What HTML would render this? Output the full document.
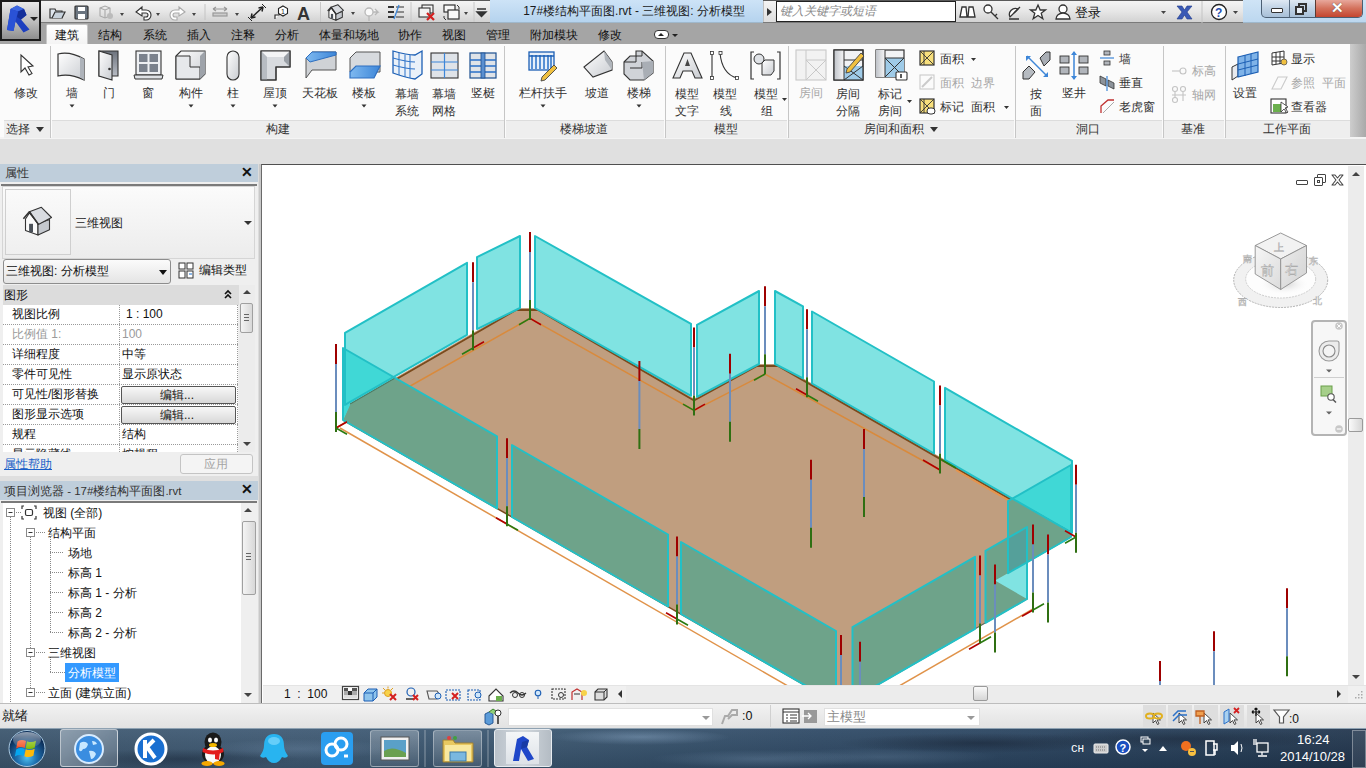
<!DOCTYPE html>
<html><head><meta charset="utf-8">
<style>
*{margin:0;padding:0;box-sizing:border-box}
html,body{width:1366px;height:768px;overflow:hidden;background:#dfdfdf;font-family:"Liberation Sans",sans-serif;font-size:12px;color:#222;position:relative}
.a{position:absolute}
.t{position:absolute;white-space:nowrap;line-height:14px}
svg{position:absolute;overflow:visible}
.c{transform:translateX(-50%)}
.g{color:#a8a8a8}
</style></head><body>
<!-- TITLE BAR -->
<div class="a" style="left:0;top:0;width:1366px;height:23px;background:linear-gradient(#f4f4f4,#e6e6e6 50%,#d2d2d2);border-top:1px solid #5a5a5a;border-bottom:1px solid #7a7a7a"></div>
<div class="a" style="left:1243px;top:0;width:123px;height:23px;background:linear-gradient(#cfe4f6,#bcd7ef);border-bottom:1px solid #9fb8cc"></div>
<div class="a" style="left:490px;top:0;width:273px;height:23px;background:linear-gradient(#cde3f7,#b5d3ee);border-bottom:1px solid #9fb8cc"></div>
<div class="t" style="left:634px;top:4px;font-size:11.9px;color:#1a1a1a" ><span class="c" style="position:absolute;left:0">17#楼结构平面图.rvt - 三维视图: 分析模型</span></div>
<!-- tabs row -->
<div class="a" style="left:0;top:23px;width:1366px;height:21px;background:#a5a5a5"></div>
<!-- app button -->
<div class="a" style="left:0;top:0;width:41px;height:41px;background:linear-gradient(#e8e8e8,#bcbcbc 55%,#8f8f8f);border:2px solid #1b1b1b"></div>
<svg style="left:4px;top:2px" width="30" height="32" viewBox="0 0 30 32">
<path d="M3 28 L6.5 7 L13 3.5 L20 7 L22.5 13 L17 17.5 L25.5 27.5 L19.5 30.5 L11.5 19.5 L9.5 29 Z" fill="#1d3fbf"/>
<path d="M6.5 7 L13 3.5 L20 7 L14 9.5 Z" fill="#3b66e0"/>
<path d="M14 9.5 L20 7 L22.5 13 L17 17.5 L13 15 Z" fill="#142f9a"/>
<path d="M6.5 7 L14 9.5 L11.5 19.5 L9.5 29 L3 28 Z" fill="#2a52d6"/>
</svg>
<div class="a" style="left:30px;top:17px;width:0;height:0;border-left:4px solid transparent;border-right:4px solid transparent;border-top:4px solid #222"></div>
<!-- QAT -->
<svg style="left:48px;top:4px" width="440" height="16" viewBox="0 0 440 16">
<g fill="none" stroke="#333" stroke-width="1.2">
 <path d="M2 5 h5 l1 2 h6 v7 h-12 z" fill="#dfe6ee"/><path d="M4 14 l3 -6 h10 l-3 6" fill="#c8d2dc"/>
 <rect x="27" y="2" width="13" height="13" rx="1" fill="#6b7580"/><rect x="30" y="3" width="7" height="4" fill="#fff" stroke="none"/><rect x="30" y="10" width="7" height="5" fill="#fff" stroke="none"/>
</g>
<g fill="none" stroke="#a9a9a9" stroke-width="1.1"><path d="M52 4 l5 -2 l5 2 v8 l-5 2 l-5 -2 z"/><path d="M52 4 l5 2 l5 -2 M57 6 v8"/></g>
<circle cx="62" cy="12" r="3" fill="#bbb"/>
<path d="M72 9 l4 0 l-2 3 z" fill="#444"/>
<path d="M88 8 l6 -5 v3 h4 a5 5 0 0 1 0 10 h-2 v-3 h2 a2 2 0 0 0 0 -4 h-4 v3 z" fill="#fff" stroke="#333" stroke-width="1.1"/>
<path d="M108 9 l4 0 l-2 3 z" fill="#444"/>
<path d="M137 8 l-6 -5 v3 h-4 a5 5 0 0 0 0 10 h2 v-3 h-2 a2 2 0 0 1 0 -4 h4 v3 z" fill="#fff" stroke="#aaa" stroke-width="1.1"/>
<path d="M144 9 l4 0 l-2 3 z" fill="#444"/>
<line x1="157" y1="0" x2="157" y2="16" stroke="#c4c4c4"/>
<g stroke="#999" stroke-width="1.2" fill="none"><path d="M165 5 h14 M165 5 l3 -2 M165 5 l3 2 M179 5 l-3 -2 M179 5 l-3 2"/><rect x="165" y="9" width="14" height="3" fill="#ccc"/></g>
<path d="M187 9 l4 0 l-2 3 z" fill="#444"/>
<g stroke="#222" stroke-width="1.5" fill="none"><path d="M203 14 l12 -11"/><path d="M203 14 l1 -4.5 M203 14 l4.5 -1 M215 3 l-4.5 1 M215 3 l-1 4.5"/><path d="M200 13 l4 4 M214 0 l4 4" stroke-width="1"/></g>
<g stroke="#222" stroke-width="1.1" fill="#fff"><path d="M227 15 v-4 h4 l2 -2"/><path d="M235 2 l4.5 2.5 v5 l-4.5 2.5 l-4.5 -2.5 v-5 z"/></g><text x="233" y="10" font-size="7" fill="#222">1</text>
<text x="249" y="16" font-size="18" font-weight="bold" fill="#333" style="font-family:'Liberation Sans'">A</text>
<line x1="272.5" y1="-2" x2="272.5" y2="18" stroke="#c8c8c8"/>
<g transform="translate(279.5,0.5) scale(0.56) translate(-23,-207)">
<path d="M25.5 219 L29.4 213 L38 223.5 L38 235 L25.5 230.4 Z" fill="#fafafa" stroke="#333" stroke-width="1.8" stroke-linejoin="round"/>
<path d="M38 223.5 L49.5 219.5 L49.5 229.8 L38 235 Z" fill="#c4c8ce" stroke="#333" stroke-width="1.8" stroke-linejoin="round"/>
<path d="M29.4 211.8 L41.4 207.3 L51.5 217.5 L38.4 224.4 Z" fill="#d9dce1" stroke="#333" stroke-width="1.8" stroke-linejoin="round"/>
<path d="M23.4 218.7 L29.4 211.8 L38.4 224.4" fill="none" stroke="#333" stroke-width="2.4" stroke-linejoin="round"/>
<rect x="29.1" y="223.8" width="3.9" height="8.4" fill="#4a5058"/>
</g>
<path d="M303 8 l4 0 l-2 3 z" fill="#444"/>
<g stroke="#b8b8b8" stroke-width="1.3" fill="#fafafa"><circle cx="321" cy="8" r="4"/><path d="M325 8 l5 0 l-3 -3 M330 8 l-3 3"/><path d="M321 12 v5"/></g>
<g stroke="#333" stroke-width="2" fill="none"><path d="M340 3 h6 M340 8 h6 M340 13 h6"/><path d="M348 3 h8 M348 8 h8 M348 13 h8" stroke-width="1.2"/></g><path d="M346 15 l5 -14" stroke="#3d86d8" stroke-width="1.3"/>
<line x1="363" y1="-2" x2="363" y2="18" stroke="#c8c8c8"/>
<g stroke="#333" stroke-width="1.1" fill="#f4f4f4"><rect x="374" y="1" width="11" height="8"/><rect x="371" y="4" width="11" height="9"/></g><path d="M379 9 l7 7 M386 9 l-7 7" stroke="#d42020" stroke-width="2.2"/>
<g stroke="#333" stroke-width="1.2" fill="#f8f8f8"><rect x="396" y="1" width="11" height="7"/><rect x="400" y="6" width="11" height="9"/></g><path d="M409 1 l2 2 v2 M396 12 v2 l2 2" stroke="#333" stroke-width="1" fill="none"/>
<path d="M416 8 l4 0 l-2 3 z" fill="#444"/>
<line x1="426" y1="-2" x2="426" y2="18" stroke="#c8c8c8"/>
<path d="M429 5 h9 M429 8 l4.5 4.5 l4.5 -4.5 z" stroke="#333" fill="#333" stroke-width="1.4"/>
</svg>
<!-- title right tools -->
<div class="a" style="left:763px;top:1px;width:12px;height:21px;background:linear-gradient(#f4f4f4,#dedede);border-left:1px solid #c0c0c0"></div>
<div class="a" style="left:767px;top:8px;width:0;height:0;border-top:4px solid transparent;border-bottom:4px solid transparent;border-left:5px solid #333"></div>
<div class="a" style="left:776px;top:1px;width:180px;height:21px;background:#fff;border:1px solid #222"></div>
<div class="t" style="left:780px;top:4px;font-style:italic;color:#8a8a8a;font-size:12px">键入关键字或短语</div>
<svg style="left:958px;top:3px" width="290" height="18" viewBox="0 0 290 18">
<g stroke="#333" stroke-width="1.3" fill="#fff">
 <path d="M2 14 l2 -10 h4 l1 10 z M10 14 l1 -10 h4 l2 10 z"/>
 <circle cx="30" cy="6" r="4"/><path d="M33 9 l7 7 M37 13 l2 -2"/>
 <path d="M52 14 a6 6 0 0 1 8 -8 z"/><path d="M56 10 l6 -6 M51 16 h10"/>
 <path d="M80 2 l2.2 5 h5.3 l-4.3 3.3 l1.6 5.5 l-4.8 -3.3 l-4.8 3.3 l1.6 -5.5 l-4.3 -3.3 h5.3 z"/>
 <circle cx="105" cy="6" r="4"/><path d="M98 16 a7 6 0 0 1 14 0 z"/>
</g>
<text x="117" y="14" font-size="12.5" fill="#111">登录</text>
<path d="M203 8 l5 0 l-2.5 3 z" fill="#444"/>
<path d="M219 3 h5 l2.5 4 l2.5 -4 h5 l-5 6 l5 7 h-5 l-2.5 -4 l-2.5 4 h-5 l5 -7 z" fill="#3a59b5" stroke="#1e3a8a" stroke-width="0.6"/>
<line x1="244" y1="-2" x2="244" y2="20" stroke="#c4c4c4"/>
<circle cx="261" cy="9" r="7.5" fill="#fff" stroke="#222" stroke-width="1.3"/><text x="257" y="13.5" font-size="12" font-weight="bold" fill="#1f4fb0">?</text>
<path d="M275 8 l5 0 l-2.5 3 z" fill="#444"/>
</svg>
<!-- window buttons -->
<div class="a" style="left:1261px;top:0;width:102px;height:18px;border:1px solid #4b5f73;border-top:none;border-radius:0 0 5px 5px;overflow:hidden;background:linear-gradient(#dfe9f3,#c2d4e6 45%,#a8c0d8)">
 <div class="a" style="left:27px;top:0;width:1px;height:18px;background:#5a6e82"></div>
 <div class="a" style="left:53px;top:0;width:48px;height:18px;background:linear-gradient(#e8a89c,#d4735e 45%,#c2402a);border-left:1px solid #5a3a32"></div>
 <div class="a" style="left:9px;top:8px;width:12px;height:5px;background:#fff;border:1px solid #333;border-radius:1px"></div>
 <div class="a" style="left:36px;top:3px;width:9px;height:9px;border:2px solid #333;background:transparent"></div>
 <div class="a" style="left:33px;top:6px;width:9px;height:9px;border:2px solid #333;background:#e6eef6"></div>
 <div class="t" style="left:69px;top:1px;font-size:15px;font-weight:bold;color:#fff;text-shadow:0 0 1px #333">✕</div>
</div>
<!-- TABS -->
<div class="a" style="left:46px;top:24px;width:42px;height:21px;background:linear-gradient(#ffffff,#f3f3f3);border:1px solid #c8c8c8;border-bottom:none;border-radius:2px 2px 0 0"></div>
<div class="t" style="left:55px;top:28px;font-size:12px;color:#111">建筑</div>
<div class="t" style="left:98px;top:28px;font-size:12px;color:#111">结构</div>
<div class="t" style="left:143px;top:28px;font-size:12px;color:#111">系统</div>
<div class="t" style="left:187px;top:28px;font-size:12px;color:#111">插入</div>
<div class="t" style="left:231px;top:28px;font-size:12px;color:#111">注释</div>
<div class="t" style="left:275px;top:28px;font-size:12px;color:#111">分析</div>
<div class="t" style="left:319px;top:28px;font-size:12px;color:#111">体量和场地</div>
<div class="t" style="left:398px;top:28px;font-size:12px;color:#111">协作</div>
<div class="t" style="left:442px;top:28px;font-size:12px;color:#111">视图</div>
<div class="t" style="left:486px;top:28px;font-size:12px;color:#111">管理</div>
<div class="t" style="left:530px;top:28px;font-size:12px;color:#111">附加模块</div>
<div class="t" style="left:598px;top:28px;font-size:12px;color:#111">修改</div>
<div class="a" style="left:654px;top:30px;width:15px;height:9px;background:#fff;border:1px solid #333;border-radius:4px"></div>
<div class="a" style="left:658px;top:33px;width:0;height:0;border-left:3.5px solid transparent;border-right:3.5px solid transparent;border-bottom:3.5px solid #222"></div>
<div class="a" style="left:672px;top:34px;width:0;height:0;border-left:3px solid transparent;border-right:3px solid transparent;border-top:3px solid #222"></div>
<!-- RIBBON BODY -->
<div class="a" style="left:0;top:44px;width:1350px;height:94px;background:#fbfbfb"></div>
<div class="a" style="left:1350px;top:44px;width:16px;height:94px;background:linear-gradient(90deg,#cdcdcd,#a9a9a9)"></div>
<div class="a" style="left:0;top:137px;width:1366px;height:2px;background:#f4f4f4"></div>
<!-- label strips -->
<div class="a" style="left:4px;top:120px;width:46px;height:18px;background:#eeeeee;border-top:1px solid #dcdcdc"></div>
<div class="a" style="left:52px;top:120px;width:452px;height:18px;background:#eeeeee;border-top:1px solid #dcdcdc"></div>
<div class="a" style="left:506px;top:120px;width:158px;height:18px;background:#eeeeee;border-top:1px solid #dcdcdc"></div>
<div class="a" style="left:666px;top:120px;width:121px;height:18px;background:#eeeeee;border-top:1px solid #dcdcdc"></div>
<div class="a" style="left:789px;top:120px;width:225px;height:18px;background:#eeeeee;border-top:1px solid #dcdcdc"></div>
<div class="a" style="left:1016px;top:120px;width:146px;height:18px;background:#eeeeee;border-top:1px solid #dcdcdc"></div>
<div class="a" style="left:1164px;top:120px;width:60px;height:18px;background:#eeeeee;border-top:1px solid #dcdcdc"></div>
<div class="a" style="left:1226px;top:120px;width:124px;height:18px;background:#eeeeee;border-top:1px solid #dcdcdc"></div>
<!-- separators -->
<div class="a" style="left:50px;top:46px;width:1px;height:92px;background:#c6c6c6"></div>
<div class="a" style="left:504px;top:46px;width:1px;height:92px;background:#c6c6c6"></div>
<div class="a" style="left:665px;top:46px;width:1px;height:92px;background:#c6c6c6"></div>
<div class="a" style="left:788px;top:46px;width:1px;height:92px;background:#c6c6c6"></div>
<div class="a" style="left:1015px;top:46px;width:1px;height:92px;background:#c6c6c6"></div>
<div class="a" style="left:1163px;top:46px;width:1px;height:92px;background:#c6c6c6"></div>
<div class="a" style="left:1225px;top:46px;width:1px;height:92px;background:#c6c6c6"></div>
<!-- panel labels -->
<div class="t" style="left:6px;top:122px;color:#333">选择</div><div class="a" style="left:36px;top:127px;width:0;height:0;border-left:4.5px solid transparent;border-right:4.5px solid transparent;border-top:5px solid #333"></div>
<div class="t" style="left:266px;top:122px;color:#333">构建</div>
<div class="t" style="left:560px;top:122px;color:#333">楼梯坡道</div>
<div class="t" style="left:714px;top:122px;color:#333">模型</div>
<div class="t" style="left:864px;top:122px;color:#333">房间和面积</div><div class="a" style="left:930px;top:127px;width:0;height:0;border-left:4.5px solid transparent;border-right:4.5px solid transparent;border-top:5px solid #333"></div>
<div class="t" style="left:1076px;top:122px;color:#333">洞口</div>
<div class="t" style="left:1181px;top:122px;color:#333">基准</div>
<div class="t" style="left:1263px;top:122px;color:#333">工作平面</div>
<!-- button labels -->
<div style="position:absolute;left:0;top:0;color:#333">
<div class="t" style="left:14px;top:86px">修改</div>
<div class="t" style="left:66px;top:86px">墙</div>
<div class="t" style="left:103px;top:86px">门</div>
<div class="t" style="left:142px;top:86px">窗</div>
<div class="t" style="left:179px;top:86px">构件</div>
<div class="t" style="left:227px;top:86px">柱</div>
<div class="t" style="left:263px;top:86px">屋顶</div>
<div class="t" style="left:302px;top:86px">天花板</div>
<div class="t" style="left:352px;top:86px">楼板</div>
<div class="t" style="left:395px;top:86px;line-height:17px">幕墙<br>系统</div>
<div class="t" style="left:432px;top:86px;line-height:17px">幕墙<br>网格</div>
<div class="t" style="left:471px;top:86px">竖梃</div>
<div class="t" style="left:519px;top:86px">栏杆扶手</div>
<div class="t" style="left:585px;top:86px">坡道</div>
<div class="t" style="left:627px;top:86px">楼梯</div>
<div class="t" style="left:675px;top:86px;line-height:17px">模型<br>文字</div>
<div class="t" style="left:713px;top:86px;line-height:17px">模型<br>&nbsp;&nbsp;线</div>
<div class="t" style="left:754px;top:86px;line-height:17px">模型<br>&nbsp;&nbsp;组</div>
<div class="t g" style="left:799px;top:86px">房间</div>
<div class="t" style="left:836px;top:86px;line-height:17px">房间<br>分隔</div>
<div class="t" style="left:878px;top:86px;line-height:17px">标记<br>房间</div>
<div class="t" style="left:940px;top:52px">面积</div>
<div class="t g" style="left:940px;top:76px">面积&nbsp;&nbsp;边界</div>
<div class="t" style="left:940px;top:100px">标记&nbsp;&nbsp;面积</div>
<div class="t" style="left:1030px;top:86px;line-height:17px">按<br>面</div>
<div class="t" style="left:1062px;top:86px">竖井</div>
<div class="t" style="left:1119px;top:52px">墙</div>
<div class="t" style="left:1119px;top:76px">垂直</div>
<div class="t" style="left:1119px;top:100px">老虎窗</div>
<div class="t g" style="left:1192px;top:64px">标高</div>
<div class="t g" style="left:1192px;top:88px">轴网</div>
<div class="t" style="left:1233px;top:86px">设置</div>
<div class="t" style="left:1291px;top:52px">显示</div>
<div class="t g" style="left:1291px;top:76px">参照&nbsp;&nbsp;平面</div>
<div class="t" style="left:1291px;top:100px">查看器</div>
</div>
<svg style="left:0;top:0" width="1366" height="140" viewBox="0 0 1366 140">
<defs>
<linearGradient id="gw" x1="0" y1="0" x2="1" y2="1"><stop offset="0" stop-color="#ffffff"/><stop offset="1" stop-color="#c9ccd1"/></linearGradient>
<linearGradient id="gd" x1="0" y1="0" x2="0" y2="1"><stop offset="0" stop-color="#6c727c"/><stop offset="1" stop-color="#b8bcc4"/></linearGradient>
<linearGradient id="gcol" x1="0" y1="0" x2="1" y2="0"><stop offset="0" stop-color="#bfc3c9"/><stop offset="1" stop-color="#f6f6f7"/></linearGradient>
<linearGradient id="gb" x1="0" y1="0" x2="1" y2="0"><stop offset="0" stop-color="#7fb9f0"/><stop offset="1" stop-color="#3d86d8"/></linearGradient>
</defs>
<!-- cursor -->
<path d="M21 55 L21 72 L25 68 L29 75 L32 73.5 L28 67 L33 66 Z" fill="#fff" stroke="#333" stroke-width="1.1"/>
<!-- wall -->
<path d="M58 54 Q70 51 84 59 L84 80 Q70 73 58 76 Z" fill="url(#gw)" stroke="#333" stroke-width="1.2"/>
<path d="M80 57 L84 59 L84 80 L80 77 Z" fill="#aeb3ba"/>
<!-- door -->
<path d="M99 51 L118 51 L118 76 L99 76 Z" fill="url(#gd)" stroke="#333" stroke-width="1.1"/>
<path d="M99 51 L112 55 L112 80 L99 76 Z" fill="url(#gw)" stroke="#333" stroke-width="1.1"/>
<circle cx="109.5" cy="69" r="1.3" fill="#333"/>
<!-- window -->
<rect x="136" y="51" width="25" height="24" fill="#eef0f3" stroke="#333" stroke-width="1.1"/>
<rect x="139" y="54" width="19" height="18" fill="#7b828d"/>
<path d="M148.5 54 V72 M139 63 H158" stroke="#eef0f3" stroke-width="2"/>
<path d="M134 75 H163 L162 79 H135 Z" fill="#dfe2e6" stroke="#333" stroke-width="1"/>
<!-- component -->
<path d="M176 56 L181 51 L205 51 L205 74 L200 79 L176 79 Z" fill="url(#gw)" stroke="#333" stroke-width="1.1"/>
<path d="M176 56 L190 56 L190 67 L200 67 L200 79 L176 79 Z" fill="#e6e8eb" stroke="#333" stroke-width="1"/>
<path d="M200 56 L205 51 L205 74 L200 79 Z" fill="#9ea3aa"/>
<!-- column -->
<rect x="227" y="51" width="12" height="29" rx="6" fill="url(#gw)" stroke="#333" stroke-width="1.1"/>
<!-- roof -->
<path d="M261 51 H290 V67 H276 V80 H261 Z" fill="#d8dbdf" stroke="#333" stroke-width="1.1"/>
<path d="M261 51 L267 57 H284 L290 51 Z" fill="#f4f5f6"/>
<path d="M267 57 V80 H261 V51 Z" fill="#b7bcc2"/><path d="M284 57 L290 51 V67 L284 61 Z" fill="#9aa0a7"/>
<path d="M261 51 H290 V67 H276 V80 H261 Z" fill="none" stroke="#333" stroke-width="1.1"/>
<!-- ceiling -->
<path d="M306 58 L312 52 H336 V70 H312 L306 78 Z" fill="#cfd2d6" stroke="#555" stroke-width="1"/>
<path d="M306 58 L312 52 H336 L336 55 L310 62 Z" fill="url(#gb)" stroke="#2e6fc0" stroke-width="1"/>
<!-- floor -->
<path d="M350 58 L356 52 H380 V72 H350 Z" fill="#d7dade" stroke="#555" stroke-width="1"/>
<path d="M350 72 L356 66 H380 L374 78 H350 Z" fill="url(#gb)" stroke="#2e6fc0" stroke-width="1.2"/>
<!-- curtain system -->
<path d="M393 51 Q407 55 415 55 L422 51 V74 L415 79 Q407 78 393 73 Z" fill="#eaf1f9" stroke="#1c5fb4" stroke-width="1.3"/>
<path d="M399 53 V75 M405 54.5 V77 M410 55 V78 M393 58 Q407 62 415 62 M393 65 Q407 69 415 69" stroke="#2a70c8" stroke-width="1" fill="none"/>
<!-- curtain grid -->
<rect x="431" y="53" width="27" height="25" fill="#dfe3e8" stroke="#333" stroke-width="1.1"/>
<path d="M444.5 53 V78 M431 62 H458 M431 70 H458" stroke="#3d86d8" stroke-width="1.2"/>
<!-- mullion -->
<rect x="470" y="53" width="26" height="25" fill="#dfe3e8" stroke="#1c4f8f" stroke-width="1.2"/>
<path d="M470 60 H496 M470 66 H496 M470 72 H496" stroke="#2a70c8" stroke-width="1.5"/>
<rect x="481" y="53" width="4" height="25" fill="#5a8fd0" stroke="#1c4f8f" stroke-width="0.8"/>
<!-- railing -->
<rect x="529" y="52" width="25" height="18" fill="#e7f0fa" stroke="#1c5fb4" stroke-width="1.3"/>
<path d="M532 55 V69 M536 55 V69 M540 55 V69 M544 55 V69 M548 55 V69 M551 55 V69" stroke="#2a70c8" stroke-width="1.5"/>
<path d="M529 56 H554" stroke="#1c5fb4" stroke-width="1.5"/>
<path d="M542 77 L554 65 L557 68 L545 80 L541 81 Z" fill="#f0c040" stroke="#444" stroke-width="0.9"/>
<!-- ramp -->
<path d="M584 67 L604 51 L612 62 L612 70 L593 77 Z" fill="url(#gw)" stroke="#333" stroke-width="1.1"/>
<path d="M604 51 L612 62 L612 70 L605 60 Z" fill="#b0b5bb"/>
<!-- stairs -->
<path d="M624 62 L630 56 H636 V51 L642 51 L653 61 V73 L644 80 H630 L624 74 Z" fill="#d0d3d8" stroke="#333" stroke-width="1.1"/>
<path d="M624 62 H636 V56 H642 V51 M630 68 H642 V62" fill="none" stroke="#333" stroke-width="1"/>
<path d="M642 62 L653 61 V73 L644 80 Z" fill="#a9aeb5"/>
<!-- model text -->
<path d="M673 78 L684 53 L691 53 L702 78 L695 78 L692 71 L683 71 L680 78 Z" fill="url(#gw)" stroke="#333" stroke-width="1.1"/>
<path d="M685 66 L690 66 L687.5 59 Z" fill="#444"/>
<!-- model line -->
<path d="M712 53 V78 M720 53 Q722 74 737 78" fill="none" stroke="#333" stroke-width="1.1"/>
<rect x="710.5" y="51.5" width="3" height="3" fill="#fff" stroke="#333" stroke-width="0.8"/><rect x="710.5" y="76.5" width="3" height="3" fill="#fff" stroke="#333" stroke-width="0.8"/>
<rect x="719" y="51.5" width="3" height="3" fill="#fff" stroke="#333" stroke-width="0.8"/><rect x="735.5" y="76.5" width="3" height="3" fill="#fff" stroke="#333" stroke-width="0.8"/>
<!-- model group -->
<path d="M754 52 H751 V79 H754 M777 52 H780 V79 H777" fill="none" stroke="#333" stroke-width="1.2"/>
<circle cx="759" cy="59" r="5" fill="#dfe2e6" stroke="#333"/>
<path d="M762 63 L765 60 H774 V71 L771 75 H762 Z" fill="url(#gw)" stroke="#333" stroke-width="1"/>
<path d="M782 98 l5 0 l-2.5 3 z" fill="#333"/>
<!-- room gray -->
<rect x="796" y="50" width="30" height="30" fill="#f2f2f2" stroke="#c8c8c8" stroke-width="1.1"/>
<path d="M806 50 V80 M806 60 H826 M806 60 L826 80 M826 60 L806 80" stroke="#c8c8c8" stroke-width="1"/>
<!-- room separator -->
<rect x="834" y="50" width="29" height="30" fill="#f2f3f5" stroke="#333" stroke-width="1.2"/>
<rect x="834" y="50" width="10" height="30" fill="url(#gcol)"/>
<rect x="844" y="66" width="19" height="14" fill="#9fcbe8"/>
<path d="M844 50 V80 M844 60 H863 M844 66 L863 80 M863 66 L844 80" stroke="#333" stroke-width="1"/>
<rect x="834" y="50" width="29" height="30" fill="none" stroke="#333" stroke-width="1.2"/>
<path d="M847 69 L861 53 L864 56 L850 72 L846 73 Z" fill="#f0c040" stroke="#444" stroke-width="0.9"/>
<!-- tag room -->
<rect x="876" y="50" width="28" height="27" fill="#f2f3f5" stroke="#333" stroke-width="1.2"/>
<rect x="876" y="50" width="9" height="27" fill="url(#gcol)"/>
<rect x="885" y="58" width="19" height="19" fill="#9fcbe8"/>
<path d="M885 50 V77 M885 58 H904 M885 58 L904 77 M904 58 L885 77" stroke="#333" stroke-width="1"/>
<rect x="896" y="72" width="11" height="8" rx="1" fill="#fff" stroke="#333" stroke-width="1.1"/>
<path d="M901 74 v4" stroke="#111" stroke-width="1.4"/>
<path d="M907 100 l5 0 l-2.5 3 z" fill="#333"/>
<!-- small area icons -->
<rect x="920" y="51" width="14" height="14" fill="#f7df7c" stroke="#333" stroke-width="1.2"/>
<path d="M920 51 L934 65 M934 51 L920 65 M924 51 V65" stroke="#333" stroke-width="0.9"/>
<path d="M971 58 l5 0 l-2.5 3 z" fill="#333"/>
<rect x="920" y="75" width="14" height="14" fill="none" stroke="#cacaca" stroke-width="1.1"/>
<path d="M922 87 L932 77" stroke="#cacaca" stroke-width="2"/>
<rect x="920" y="99" width="14" height="14" fill="#f7df7c" stroke="#333" stroke-width="1.2"/>
<path d="M920 99 L934 113 M934 99 L920 113 M924 99 V113" stroke="#333" stroke-width="0.9"/>
<rect x="927" y="108" width="8" height="6" rx="3" fill="#fff" stroke="#333"/>
<path d="M1004 106 l5 0 l-2.5 3 z" fill="#333"/>
<!-- by face -->
<path d="M1040 58 L1046 52 H1050 V60 L1044 66 Z" fill="#a9aeb5" stroke="#333" stroke-width="1"/>
<path d="M1023 72 L1029 66 L1035 72 L1029 79 H1023 Z" fill="#b6bbc1" stroke="#333" stroke-width="1"/>
<path d="M1027 56 L1047 76" stroke="#3d86d8" stroke-width="1.5"/>
<path d="M1026 56 l5 0 l-5 5 z M1048 77 l-5 0 l5 -5 z" fill="#3d86d8"/>
<!-- shaft -->
<g fill="#b1b5bb" stroke="#333" stroke-width="0.9"><rect x="1060" y="56" width="9" height="7"/><rect x="1079" y="56" width="9" height="7"/><rect x="1060" y="67" width="9" height="7"/><rect x="1079" y="67" width="9" height="7"/></g>
<path d="M1074 52 V79" stroke="#3d86d8" stroke-width="1.5"/>
<path d="M1071 55 l3 -4 l3 4 z M1071 76 l3 4 l3 -4 z" fill="#3d86d8"/>
<!-- small opening icons -->
<g fill="#b1b5bb" stroke="#333" stroke-width="0.8"><rect x="1104" y="51" width="6" height="4"/><rect x="1104" y="61" width="6" height="4"/></g>
<path d="M1100 58 H1114" stroke="#3d86d8" stroke-width="1.2"/>
<path d="M1100 76 L1106 79 V86 L1100 83 Z M1108 80 L1114 83 V89 L1108 86 Z" fill="#8d939a" stroke="#333" stroke-width="0.8"/>
<path d="M1107 76 V91" stroke="#3d86d8" stroke-width="1.2"/>
<path d="M1101 113 V106 L1108 100 H1114" fill="none" stroke="#c03030" stroke-width="1.3"/>
<path d="M1103 113 L1114 102" stroke="#aaa" stroke-width="1"/>
<!-- datum gray -->
<g stroke="#c4c4c4" fill="none" stroke-width="1.1"><path d="M1172 71 h8"/><circle cx="1183" cy="71" r="3"/><circle cx="1175" cy="89" r="2.5"/><circle cx="1183" cy="89" r="2.5"/><circle cx="1175" cy="100" r="2.5"/><path d="M1175 92 v6 M1183 92 v9 M1172 95 h14"/></g>
<!-- workplane set -->
<path d="M1232 67 L1238 64 V76 L1232 80 Z" fill="#e8eaee" stroke="#333" stroke-width="1"/>
<path d="M1238 57 L1258 52 V72 L1238 77 Z" fill="#7fb3e8" stroke="#1c5fb4" stroke-width="1.2"/>
<path d="M1245 55 V76 M1251 54 V74 M1238 64 L1258 59 M1238 70 L1258 65" stroke="#1c5fb4" stroke-width="1"/>
<!-- show/ref/viewer -->
<g stroke="#333" stroke-width="1" fill="#fff"><path d="M1272 53 L1284 51 V63 L1272 65 Z"/><path d="M1276 52 V64 M1280 52 V64 M1272 57 H1284 M1272 61 H1284"/></g>
<circle cx="1284" cy="62" r="3" fill="#f0c040" stroke="#555" stroke-width="0.8"/>
<path d="M1272 89 L1278 77 H1287 L1281 89 Z" fill="none" stroke="#cacaca" stroke-width="1.1"/>
<rect x="1271" y="99" width="15" height="14" fill="#fff" stroke="#333" stroke-width="1.1"/>
<rect x="1273" y="104" width="9" height="8" fill="#6bb04d"/>
<path d="M1281 102 L1281 112 L1284 109 L1287 113 L1288 112 L1285 108 L1288 107 Z" fill="#fff" stroke="#333" stroke-width="0.8"/>
<!-- dropdown carets under buttons -->
<g fill="#333"><path d="M69.5 104.5 h5 l-2.5 3 z"/><path d="M188.5 104.5 h5 l-2.5 3 z"/><path d="M230.5 104.5 h5 l-2.5 3 z"/><path d="M272.5 104.5 h5 l-2.5 3 z"/><path d="M361.5 104.5 h5 l-2.5 3 z"/><path d="M540.5 104.5 h5 l-2.5 3 z"/><path d="M636.5 104.5 h5 l-2.5 3 z"/></g>
</svg>
<!-- PROPERTIES -->
<div class="a" style="left:0;top:139px;width:1366px;height:26px;background:#e0e0e0"></div>
<div class="a" style="left:0;top:164px;width:258px;height:18px;background:#bfcedb"></div>
<div class="t" style="left:5px;top:166px;font-size:12px;color:#333">属性</div>
<div class="t" style="left:241px;top:165px;font-size:14px;font-weight:bold;color:#111">✕</div>
<div class="a" style="left:0;top:182px;width:258px;height:294px;background:#efefef"></div>
<div class="a" style="left:1px;top:184px;width:256px;height:2px;background:#7a7a7a"></div>
<div class="a" style="left:2px;top:186px;width:253px;height:73px;background:linear-gradient(#fbfbfb,#ececec);border:1px solid #d5d5d5"></div>
<div class="a" style="left:5px;top:189px;width:66px;height:66px;background:linear-gradient(#fafafa,#efefef);border:1px solid #cfcfcf"></div>
<svg style="left:15px;top:198px" width="45" height="46" viewBox="15 198 45 46">
<path d="M25.5 219 L29.4 213 L38 223.5 L38 235 L25.5 230.4 Z" fill="#fafafa" stroke="#333" stroke-width="1.1" stroke-linejoin="round"/>
<path d="M38 223.5 L49.5 219.5 L49.5 229.8 L38 235 Z" fill="#c4c8ce" stroke="#333" stroke-width="1.1" stroke-linejoin="round"/>
<path d="M29.4 211.8 L41.4 207.3 L51.5 217.5 L38.4 224.4 Z" fill="#d9dce1" stroke="#333" stroke-width="1.1" stroke-linejoin="round"/>
<path d="M23.4 218.7 L29.4 211.8 L38.4 224.4" fill="none" stroke="#333" stroke-width="1.6" stroke-linejoin="round"/>
<rect x="29.1" y="223.8" width="3.9" height="8.4" fill="#4a5058"/>
</svg>
<div class="t" style="left:75px;top:216px;font-size:12px;color:#222">三维视图</div>
<div class="a" style="left:244px;top:221px;width:0;height:0;border-left:4px solid transparent;border-right:4px solid transparent;border-top:4px solid #333"></div>
<div class="a" style="left:3px;top:259px;width:168px;height:25px;background:linear-gradient(#fbfbfb,#e4e4e4);border:1px solid #8d8d8d;border-radius:3px"></div>
<div class="t" style="left:6px;top:264px;font-size:12px;color:#111">三维视图: 分析模型</div>
<div class="a" style="left:159px;top:270px;width:0;height:0;border-left:4px solid transparent;border-right:4px solid transparent;border-top:5px solid #111"></div>
<svg style="left:178px;top:262px" width="18" height="18" viewBox="0 0 18 18">
<g fill="#fff" stroke="#333" stroke-width="1"><rect x="1" y="1" width="6" height="6"/><rect x="1" y="9" width="6" height="7"/><rect x="9" y="1" width="6" height="6"/><rect x="9" y="9" width="6" height="7"/></g>
<path d="M11 12 h3" stroke="#3d86d8" stroke-width="1.2"/>
</svg>
<div class="t" style="left:199px;top:263px;font-size:12px;color:#111">编辑类型</div>
<!-- grid -->
<div class="a" style="left:3px;top:285px;width:236px;height:20px;background:#dcdcdc"></div>
<div class="t" style="left:4px;top:288px;font-size:12px;color:#111">图形</div>
<svg style="left:223px;top:289px" width="10" height="12" viewBox="0 0 10 12"><path d="M2 5 l3 -3 l3 3 M2 9 l3 -3 l3 3" fill="none" stroke="#111" stroke-width="1.6"/></svg>
<div class="a" style="left:3px;top:305px;width:235px;height:147px;background:#fff"></div>
<svg style="left:3px;top:305px" width="236" height="147" viewBox="0 0 236 147">
<g stroke="#9a9a9a" stroke-width="1" stroke-dasharray="1,1">
<path d="M0 19.5 H235 M0 39.5 H235 M0 59.5 H235 M0 79.5 H235 M0 99.5 H235 M0 119.5 H235 M0 139.5 H235"/>
<path d="M116.5 0 V147 M234.5 0 V147"/>
</g>
</svg>
<div style="position:absolute;left:0;top:0;font-size:12px;color:#111">
<div class="t" style="left:12px;top:307px">视图比例</div><div class="t" style="left:126px;top:307px">1 : 100</div>
<div class="t" style="left:12px;top:327px;color:#9a9a9a">比例值 1:</div><div class="t" style="left:122px;top:327px;color:#9a9a9a">100</div>
<div class="t" style="left:12px;top:347px">详细程度</div><div class="t" style="left:122px;top:347px">中等</div>
<div class="t" style="left:12px;top:367px">零件可见性</div><div class="t" style="left:122px;top:367px">显示原状态</div>
<div class="t" style="left:12px;top:387px">可见性/图形替换</div>
<div class="t" style="left:12px;top:407px">图形显示选项</div>
<div class="t" style="left:12px;top:427px">规程</div><div class="t" style="left:122px;top:427px">结构</div>
<div class="a" style="left:3px;top:445px;width:235px;height:7px;overflow:hidden"><div class="t" style="left:9px;top:2px">显示隐藏线</div><div class="t" style="left:119px;top:2px">按规程</div></div>
</div>
<div class="a" style="left:121px;top:386px;width:115px;height:18px;background:linear-gradient(#f8f8f8,#d8d8d8);border:1px solid #555;border-radius:2px"></div>
<div class="t" style="left:160px;top:388px;font-size:12px;color:#111">编辑...</div>
<div class="a" style="left:121px;top:406px;width:115px;height:18px;background:linear-gradient(#f8f8f8,#d8d8d8);border:1px solid #555;border-radius:2px"></div>
<div class="t" style="left:160px;top:408px;font-size:12px;color:#111">编辑...</div>
<!-- props scrollbar -->
<div class="a" style="left:239px;top:285px;width:16px;height:167px;background:#ececec"></div>
<div class="a" style="left:243px;top:290px;width:0;height:0;border-left:4px solid transparent;border-right:4px solid transparent;border-bottom:4px solid #444"></div>
<div class="a" style="left:240px;top:303px;width:13px;height:30px;background:linear-gradient(90deg,#f4f4f4,#d8d8d8);border:1px solid #a0a0a0;border-radius:2px"></div>
<div class="a" style="left:244px;top:314px;width:5px;height:7px;border-top:1px solid #666;border-bottom:1px solid #666"><div class="a" style="left:0;top:2px;width:5px;height:1px;background:#666"></div></div>
<div class="a" style="left:243px;top:442px;width:0;height:0;border-left:4px solid transparent;border-right:4px solid transparent;border-top:4px solid #444"></div>
<div class="t" style="left:4px;top:457px;font-size:12px;color:#1a5fc8;text-decoration:underline">属性帮助</div>
<div class="a" style="left:180px;top:454px;width:73px;height:20px;background:#f4f4f4;border:1px solid #c4c4c4;border-radius:3px"></div>
<div class="t" style="left:204px;top:457px;font-size:12px;color:#a4a4a4">应用</div>
<div class="a" style="left:0;top:476px;width:262px;height:5px;background:#dfdfdf"></div>
<div class="a" style="left:258px;top:164px;width:4px;height:541px;background:#dcdcdc"></div>
<!-- BROWSER -->
<div class="a" style="left:0;top:481px;width:258px;height:19px;background:#bfcedb"></div>
<div class="t" style="left:4px;top:484px;font-size:11.5px;color:#333">项目浏览器 - 17#楼结构平面图.rvt</div>
<div class="t" style="left:241px;top:482px;font-size:14px;font-weight:bold;color:#111">✕</div>
<div class="a" style="left:0;top:500px;width:258px;height:203px;background:#efefef"></div>
<div class="a" style="left:1px;top:501px;width:256px;height:2px;background:#7a7a7a"></div>
<div class="a" style="left:3px;top:503px;width:238px;height:200px;background:#fff"></div>
<svg style="left:3px;top:503px" width="238" height="200" viewBox="0 0 238 200">
<g stroke="#888" stroke-width="1" stroke-dasharray="1,1" fill="none">
<path d="M7.5 14 V200 M11 9.5 H18"/>
<path d="M27.5 34 V145 M31 29.5 H42"/>
<path d="M47.5 34 V129.5 M47 49.5 H60 M47 69.5 H60 M47 89.5 H60 M47 109.5 H60 M47 129.5 H60"/>
<path d="M31 149.5 H42 M31 189.5 H42 M27.5 154 V185"/>
<path d="M47.5 154 V169.5 M47 169.5 H62"/>

</g>
<g fill="#fff" stroke="#8a8a8a" stroke-width="1">
<rect x="3.5" y="5.5" width="8" height="8"/><rect x="23.5" y="25.5" width="8" height="8"/><rect x="23.5" y="145.5" width="8" height="8"/><rect x="23.5" y="185.5" width="8" height="8"/>
</g>
<g stroke="#333" stroke-width="1"><path d="M5.5 9.5 h4 M25.5 29.5 h4 M25.5 149.5 h4 M25.5 189.5 h4"/></g>
<g stroke="#333" stroke-width="1.2" fill="none"><path d="M21 3 h-2 v3 M21 16 h-2 v-3 M31 3 h2 v3 M31 16 h2 v-3"/><rect x="22.5" y="6.5" width="7" height="6" rx="1.5"/></g>
</svg>
<div style="position:absolute;left:0;top:0;font-size:12px;color:#111">
<div class="t" style="left:43px;top:506px">视图 (全部)</div>
<div class="t" style="left:48px;top:526px">结构平面</div>
<div class="t" style="left:68px;top:546px">场地</div>
<div class="t" style="left:68px;top:566px">标高 1</div>
<div class="t" style="left:68px;top:586px">标高 1 - 分析</div>
<div class="t" style="left:68px;top:606px">标高 2</div>
<div class="t" style="left:68px;top:626px">标高 2 - 分析</div>
<div class="t" style="left:48px;top:646px">三维视图</div>
<div class="a" style="left:65px;top:663px;width:54px;height:19px;background:#3399ff"></div>
<div class="t" style="left:68px;top:666px;color:#fff">分析模型</div>
<div class="t" style="left:48px;top:686px">立面 (建筑立面)</div>
</div>
<div class="a" style="left:241px;top:503px;width:16px;height:200px;background:#efefef"></div>
<div class="a" style="left:244px;top:508px;width:0;height:0;border-left:4px solid transparent;border-right:4px solid transparent;border-bottom:4px solid #444"></div>
<div class="a" style="left:242px;top:521px;width:14px;height:74px;background:linear-gradient(90deg,#f4f4f4,#d8d8d8);border:1px solid #a0a0a0;border-radius:2px"></div>
<div class="a" style="left:246px;top:553px;width:5px;height:7px;border-top:1px solid #666;border-bottom:1px solid #666"><div class="a" style="left:0;top:2px;width:5px;height:1px;background:#666"></div></div>
<div class="a" style="left:244px;top:693px;width:0;height:0;border-left:4px solid transparent;border-right:4px solid transparent;border-top:4px solid #444"></div>
<!-- VIEW -->
<div class="a" style="left:261px;top:164px;width:1105px;height:541px;background:#fff;border-top:1px solid #505050;border-left:1px solid #6a6a6a"></div>
<div class="a" style="left:259px;top:164px;width:2px;height:541px;background:#c8c8c8"></div>
<div class="a" style="left:262px;top:165px;width:1086px;height:520px;overflow:hidden"><svg style="left:0;top:0" width="1086" height="520" viewBox="262 165 1086 520">
<defs>
<clipPath id="cs"><polygon points="343.0,420.0 350.0,404.0 516.0,308.0 538.0,308.0 694.0,398.5 757.0,364.0 778.0,364.0 1071.0,532.0 1071.0,537.0 995.0,580.6 1027.0,599.0 841.0,706.0"/></clipPath>
<clipPath id="cBL1"><polygon points="345.0,404.9 467.0,334.8 467.0,262.8 345.0,332.9"/></clipPath>
<clipPath id="cBL2"><polygon points="477.0,329.1 520.0,308.0 520.0,236.0 477.0,257.1"/></clipPath>
<clipPath id="cBT1"><polygon points="535.0,308.0 691.0,395.8 691.0,323.8 535.0,236.0"/></clipPath>
<clipPath id="cN1"><polygon points="697.0,396.8 759.0,364.0 759.0,291.0 697.0,324.8"/></clipPath>
<clipPath id="cBR1"><polygon points="775.0,364.0 803.0,378.4 803.0,306.4 775.0,291.0"/></clipPath>
<clipPath id="cBR2"><polygon points="812.0,383.5 934.0,453.5 934.0,381.5 812.0,311.5"/></clipPath>
<clipPath id="cBR3"><polygon points="945.0,459.9 1072.0,532.8 1072.0,460.8 945.0,387.9"/></clipPath>
<clipPath id="cRE"><polygon points="1008.0,573.2 1071.0,537.0 1071.0,465.0 1008.0,501.2"/></clipPath>
<clipPath id="cFRB"><polygon points="985.5,622.8 1027.0,599.0 1027.0,527.0 985.5,550.8"/></clipPath>
<clipPath id="cFRA"><polygon points="852.5,699.2 975.0,628.8 975.0,556.8 852.5,627.2"/></clipPath>
<clipPath id="cFL1"><polygon points="343.0,420.0 497.0,508.4 497.0,436.4 343.0,348.0"/></clipPath>
<clipPath id="cFL2"><polygon points="512.0,517.0 668.0,606.5 668.0,534.5 512.0,445.0"/></clipPath>
<clipPath id="cFL3"><polygon points="681.0,614.0 836.0,703.0 836.0,631.0 681.0,542.0"/></clipPath>
</defs>
<polygon points="343.0,420.0 350.0,404.0 516.0,308.0 538.0,308.0 694.0,398.5 757.0,364.0 778.0,364.0 1071.0,532.0 1071.0,537.0 995.0,580.6 1027.0,599.0 841.0,706.0" fill="#c09e7f"/>
<polyline points="350.0,406.0 516.0,310.0 538.0,310.0 694.0,400.5 757.0,366.0 778.0,366.0 1071.0,534.0" fill="none" stroke="#7a4a1c" stroke-width="1.8"/>
<polyline points="343.0,420.0 841.0,706.0" fill="none" stroke="#7a4a1c" stroke-width="1.5"/>
<polyline points="1071.0,537.0 995.0,580.6 1027.0,599.0 841.0,706.0" fill="none" stroke="#5a6a60" stroke-width="1.2"/>
<polyline points="336.0,428.0 530.0,318.4 694.0,410.4 765.0,374.0 940.0,470.0" fill="none" stroke="#d98a3c" stroke-width="1.5"/>
<polyline points="340.0,428.0 820.0,704.5" fill="none" stroke="#e0934a" stroke-width="1.5"/>
<polyline points="1033.0,609.0 880.0,697.0" fill="none" stroke="#e0934a" stroke-width="1.5"/>
<polyline points="956.0,470.0 1071.0,536.5" fill="none" stroke="#e8944a" stroke-width="1.8"/>
<polygon points="345.0,404.9 467.0,334.8 467.0,262.8 345.0,332.9" fill="#80e3e2"/>
<polygon points="477.0,329.1 520.0,308.0 520.0,236.0 477.0,257.1" fill="#80e3e2"/>
<polygon points="535.0,308.0 691.0,395.8 691.0,323.8 535.0,236.0" fill="#80e3e2"/>
<polygon points="697.0,396.8 759.0,364.0 759.0,291.0 697.0,324.8" fill="#80e3e2"/>
<polygon points="775.0,364.0 803.0,378.4 803.0,306.4 775.0,291.0" fill="#80e3e2"/>
<polygon points="812.0,383.5 934.0,453.5 934.0,381.5 812.0,311.5" fill="#80e3e2"/>
<polygon points="945.0,459.9 1072.0,532.8 1072.0,460.8 945.0,387.9" fill="#80e3e2"/>
<polygon points="1008.0,573.2 1071.0,537.0 1071.0,465.0 1008.0,501.2" fill="#80e3e2"/>
<polygon points="985.5,622.8 1027.0,599.0 1027.0,527.0 985.5,550.8" fill="#80e3e2"/>
<polygon points="852.5,699.2 975.0,628.8 975.0,556.8 852.5,627.2" fill="#80e3e2"/>
<polygon points="343.0,420.0 497.0,508.4 497.0,436.4 343.0,348.0" fill="#80e3e2"/>
<polygon points="512.0,517.0 668.0,606.5 668.0,534.5 512.0,445.0" fill="#80e3e2"/>
<polygon points="681.0,614.0 836.0,703.0 836.0,631.0 681.0,542.0" fill="#80e3e2"/>
<g clip-path="url(#cs)">
<polygon points="343.0,420.0 497.0,508.4 497.0,436.4 343.0,348.0" fill="#6ea38a"/>
<polygon points="512.0,517.0 668.0,606.5 668.0,534.5 512.0,445.0" fill="#6ea38a"/>
<polygon points="681.0,614.0 836.0,703.0 836.0,631.0 681.0,542.0" fill="#6ea38a"/>
<polygon points="852.5,699.2 975.0,628.8 975.0,556.8 852.5,627.2" fill="#6ea38a"/>
<polygon points="985.5,622.8 1027.0,599.0 1027.0,527.0 985.5,550.8" fill="#6ea38a"/>
<polygon points="1008.0,573.2 1071.0,537.0 1071.0,465.0 1008.0,501.2" fill="#6ea38a"/>
</g>
<g clip-path="url(#cFL1)"><polygon points="345.0,404.9 467.0,334.8 467.0,262.8 345.0,332.9" fill="#40d8d6"/></g>
<g clip-path="url(#cRE)"><polygon points="945.0,459.9 1072.0,532.8 1072.0,460.8 945.0,387.9" fill="#40d8d6"/></g>
<g clip-path="url(#cs)"><g clip-path="url(#cRE)"><polygon points="985.5,622.8 1027.0,599.0 1027.0,527.0 985.5,550.8" fill="#55a09a"/></g></g>
<polygon points="343,404.5 350.5,404 343,420.5" fill="#40d8d6"/>
<g clip-path="url(#cFL1)"><polyline points="350.0,404.0 516.0,308.0" fill="none" stroke="#4f7a62" stroke-width="1.3"/></g>
<g clip-path="url(#cRE)"><polyline points="1030.0,508.6 1071.0,532.0" fill="none" stroke="#4f7a72" stroke-width="1" stroke-dasharray="2,1"/></g>
<polygon points="345.0,404.9 467.0,334.8 467.0,262.8 345.0,332.9" fill="none" stroke="#22c0c6" stroke-width="2" stroke-linejoin="round"/>
<polygon points="477.0,329.1 520.0,308.0 520.0,236.0 477.0,257.1" fill="none" stroke="#22c0c6" stroke-width="2" stroke-linejoin="round"/>
<polygon points="535.0,308.0 691.0,395.8 691.0,323.8 535.0,236.0" fill="none" stroke="#22c0c6" stroke-width="2" stroke-linejoin="round"/>
<polygon points="697.0,396.8 759.0,364.0 759.0,291.0 697.0,324.8" fill="none" stroke="#22c0c6" stroke-width="2" stroke-linejoin="round"/>
<polygon points="775.0,364.0 803.0,378.4 803.0,306.4 775.0,291.0" fill="none" stroke="#22c0c6" stroke-width="2" stroke-linejoin="round"/>
<polygon points="812.0,383.5 934.0,453.5 934.0,381.5 812.0,311.5" fill="none" stroke="#22c0c6" stroke-width="2" stroke-linejoin="round"/>
<polygon points="945.0,459.9 1072.0,532.8 1072.0,460.8 945.0,387.9" fill="none" stroke="#22c0c6" stroke-width="2" stroke-linejoin="round"/>
<polygon points="1008.0,573.2 1071.0,537.0 1071.0,465.0 1008.0,501.2" fill="none" stroke="#22c0c6" stroke-width="2" stroke-linejoin="round"/>
<polygon points="985.5,622.8 1027.0,599.0 1027.0,527.0 985.5,550.8" fill="none" stroke="#22c0c6" stroke-width="2" stroke-linejoin="round"/>
<polygon points="852.5,699.2 975.0,628.8 975.0,556.8 852.5,627.2" fill="none" stroke="#22c0c6" stroke-width="2" stroke-linejoin="round"/>
<polygon points="343.0,420.0 497.0,508.4 497.0,436.4 343.0,348.0" fill="none" stroke="#22c0c6" stroke-width="2" stroke-linejoin="round"/>
<polygon points="512.0,517.0 668.0,606.5 668.0,534.5 512.0,445.0" fill="none" stroke="#22c0c6" stroke-width="2" stroke-linejoin="round"/>
<polygon points="681.0,614.0 836.0,703.0 836.0,631.0 681.0,542.0" fill="none" stroke="#22c0c6" stroke-width="2" stroke-linejoin="round"/>
<path d="M942 460 l14 8" stroke="#2a7a10" stroke-width="1.6"/>
<path d="M336 428 l11 -6.3" stroke="#b00000" stroke-width="1.6"/>
<path d="M336 428 l11 6.3" stroke="#2a7a10" stroke-width="1.6"/>
<path d="M473 348 l11 -6.3" stroke="#b00000" stroke-width="1.6"/>
<path d="M473 348 l-11 6.3" stroke="#2a7a10" stroke-width="1.6"/>
<path d="M530 318.4 l11 6.3" stroke="#b00000" stroke-width="1.6"/>
<path d="M530 318.4 l-11 6.3" stroke="#2a7a10" stroke-width="1.6"/>
<path d="M694 410.4 l11 -6.3" stroke="#b00000" stroke-width="1.6"/>
<path d="M694 410.4 l-11 -6.3" stroke="#2a7a10" stroke-width="1.6"/>
<path d="M765 374 l0 0" stroke="#b00000" stroke-width="1.6"/>
<path d="M765 374 l-11 6.3" stroke="#2a7a10" stroke-width="1.6"/>
<path d="M807 395 l-11 -6.3" stroke="#b00000" stroke-width="1.6"/>
<path d="M807 395 l11 6.3" stroke="#2a7a10" stroke-width="1.6"/>
<path d="M940 470 l-17 -10" stroke="#b00000" stroke-width="1.6"/>
<path d="M940 470 l0 0" stroke="#2a7a10" stroke-width="1.6"/>
<path d="M1076 537 l-11 -6.3" stroke="#b00000" stroke-width="1.6"/>
<path d="M1076 537 l-11 6.3" stroke="#2a7a10" stroke-width="1.6"/>
<path d="M507 524 l-11 -6.3" stroke="#b00000" stroke-width="1.6"/>
<path d="M507 524 l11 6.3" stroke="#2a7a10" stroke-width="1.6"/>
<path d="M677 619 l-11 -6.3" stroke="#b00000" stroke-width="1.6"/>
<path d="M677 619 l11 6.3" stroke="#2a7a10" stroke-width="1.6"/>
<path d="M980 643 l-11 6.3" stroke="#b00000" stroke-width="1.6"/>
<path d="M980 643 l11 -6.3" stroke="#2a7a10" stroke-width="1.6"/>
<path d="M1033 610 l-11 6.3" stroke="#b00000" stroke-width="1.6"/>
<path d="M1033 610 l11 -6.3" stroke="#2a7a10" stroke-width="1.6"/>
<path d="M336 344 v20" stroke="#9e0000" stroke-width="2"/>
<path d="M336 364 v48" stroke="#6b8dbd" stroke-width="2"/>
<path d="M336 412 v20" stroke="#2f6f12" stroke-width="2"/>
<path d="M473 262.3 v20" stroke="#9e0000" stroke-width="2"/>
<path d="M473 282.3 v48" stroke="#6b8dbd" stroke-width="2"/>
<path d="M473 330.3 v20" stroke="#2f6f12" stroke-width="2"/>
<path d="M530 231.9 v20" stroke="#9e0000" stroke-width="2"/>
<path d="M530 251.9 v48" stroke="#6b8dbd" stroke-width="2"/>
<path d="M530 299.9 v20" stroke="#2f6f12" stroke-width="2"/>
<path d="M639.4 361 v20" stroke="#9e0000" stroke-width="2"/>
<path d="M639.4 381 v48" stroke="#6b8dbd" stroke-width="2"/>
<path d="M639.4 429 v20" stroke="#2f6f12" stroke-width="2"/>
<path d="M694 327.4 v20" stroke="#9e0000" stroke-width="2"/>
<path d="M694 347.4 v48" stroke="#6b8dbd" stroke-width="2"/>
<path d="M694 395.4 v20" stroke="#2f6f12" stroke-width="2"/>
<path d="M730 353.8 v20" stroke="#9e0000" stroke-width="2"/>
<path d="M730 373.8 v48" stroke="#6b8dbd" stroke-width="2"/>
<path d="M730 421.8 v20" stroke="#2f6f12" stroke-width="2"/>
<path d="M765 286.2 v20" stroke="#9e0000" stroke-width="2"/>
<path d="M765 306.2 v48" stroke="#6b8dbd" stroke-width="2"/>
<path d="M765 354.2 v20" stroke="#2f6f12" stroke-width="2"/>
<path d="M807 309.2 v20" stroke="#9e0000" stroke-width="2"/>
<path d="M807 329.2 v48" stroke="#6b8dbd" stroke-width="2"/>
<path d="M807 377.2 v20" stroke="#2f6f12" stroke-width="2"/>
<path d="M864 429 v20" stroke="#9e0000" stroke-width="2"/>
<path d="M864 449 v48" stroke="#6b8dbd" stroke-width="2"/>
<path d="M864 497 v20" stroke="#2f6f12" stroke-width="2"/>
<path d="M811 459.8 v20" stroke="#9e0000" stroke-width="2"/>
<path d="M811 479.8 v48" stroke="#6b8dbd" stroke-width="2"/>
<path d="M811 527.8 v20" stroke="#2f6f12" stroke-width="2"/>
<path d="M940 385.5 v20" stroke="#9e0000" stroke-width="2"/>
<path d="M940 405.5 v48" stroke="#6b8dbd" stroke-width="2"/>
<path d="M940 453.5 v20" stroke="#2f6f12" stroke-width="2"/>
<path d="M1076 464.8 v20" stroke="#9e0000" stroke-width="2"/>
<path d="M1076 484.8 v48" stroke="#6b8dbd" stroke-width="2"/>
<path d="M1076 532.8 v20" stroke="#2f6f12" stroke-width="2"/>
<path d="M507 438.2 v20" stroke="#9e0000" stroke-width="2"/>
<path d="M507 458.2 v48" stroke="#6b8dbd" stroke-width="2"/>
<path d="M507 506.2 v20" stroke="#2f6f12" stroke-width="2"/>
<path d="M677 536.6 v20" stroke="#9e0000" stroke-width="2"/>
<path d="M677 556.6 v48" stroke="#6b8dbd" stroke-width="2"/>
<path d="M677 604.6 v20" stroke="#2f6f12" stroke-width="2"/>
<path d="M841 635 v20" stroke="#9e0000" stroke-width="2"/>
<path d="M841 655 v48" stroke="#6b8dbd" stroke-width="2"/>
<path d="M841 703 v20" stroke="#2f6f12" stroke-width="2"/>
<path d="M860 641.8 v20" stroke="#9e0000" stroke-width="2"/>
<path d="M860 661.8 v48" stroke="#6b8dbd" stroke-width="2"/>
<path d="M860 709.8 v20" stroke="#2f6f12" stroke-width="2"/>
<path d="M980 555.5 v20" stroke="#9e0000" stroke-width="2"/>
<path d="M980 575.5 v48" stroke="#6b8dbd" stroke-width="2"/>
<path d="M980 623.5 v20" stroke="#2f6f12" stroke-width="2"/>
<path d="M995 564.6 v20" stroke="#9e0000" stroke-width="2"/>
<path d="M995 584.6 v48" stroke="#6b8dbd" stroke-width="2"/>
<path d="M995 632.6 v20" stroke="#2f6f12" stroke-width="2"/>
<path d="M1033 524.5 v20" stroke="#9e0000" stroke-width="2"/>
<path d="M1033 544.5 v48" stroke="#6b8dbd" stroke-width="2"/>
<path d="M1033 592.5 v20" stroke="#2f6f12" stroke-width="2"/>
<path d="M1048 534.6 v20" stroke="#9e0000" stroke-width="2"/>
<path d="M1048 554.6 v48" stroke="#6b8dbd" stroke-width="2"/>
<path d="M1048 602.6 v20" stroke="#2f6f12" stroke-width="2"/>
<path d="M1160 661 v20" stroke="#9e0000" stroke-width="2"/>
<path d="M1160 681 v48" stroke="#6b8dbd" stroke-width="2"/>
<path d="M1160 729 v20" stroke="#2f6f12" stroke-width="2"/>
<path d="M1214 631.3 v20" stroke="#9e0000" stroke-width="2"/>
<path d="M1214 651.3 v48" stroke="#6b8dbd" stroke-width="2"/>
<path d="M1214 699.3 v20" stroke="#2f6f12" stroke-width="2"/>
<path d="M1287 588.3 v20" stroke="#9e0000" stroke-width="2"/>
<path d="M1287 608.3 v48" stroke="#6b8dbd" stroke-width="2"/>
<path d="M1287 656.3 v20" stroke="#2f6f12" stroke-width="2"/>
</svg></div>
<!-- view window icons -->
<div class="a" style="left:1296px;top:180px;width:12px;height:5px;border:1.5px solid #444;border-radius:1px"></div>
<div class="a" style="left:1317px;top:174px;width:9px;height:9px;border:1.5px solid #444;border-radius:1px"></div>
<div class="a" style="left:1314px;top:177px;width:9px;height:9px;border:1.5px solid #444;background:#fff;border-radius:1px"></div>
<div class="a" style="left:1317px;top:180px;width:3px;height:3px;border:1px solid #444"></div>
<svg style="left:1331px;top:174px" width="13" height="12" viewBox="0 0 13 12"><path d="M1 1 h3 l2.5 3 l2.5 -3 h3 l-4 5 l4 5 h-3 l-2.5 -3 l-2.5 3 h-3 l4 -5 z" fill="#fff" stroke="#444" stroke-width="1.1" stroke-linejoin="round"/></svg>
<!-- viewcube -->
<svg style="left:1228px;top:228px" width="110" height="86" viewBox="1228 228 110 86">
<defs><linearGradient id="cf1" x1="0" y1="0" x2="1" y2="1"><stop offset="0" stop-color="#f6f6f6"/><stop offset="1" stop-color="#dcdcdc"/></linearGradient>
<linearGradient id="cf2" x1="0" y1="0" x2="1" y2="1"><stop offset="0" stop-color="#ececec"/><stop offset="1" stop-color="#d2d2d2"/></linearGradient>
<radialGradient id="csh" cx="0.5" cy="0.5" r="0.5"><stop offset="0" stop-color="#cfcfcf"/><stop offset="1" stop-color="#fff" stop-opacity="0"/></radialGradient></defs>
<ellipse cx="1280.7" cy="280" rx="47" ry="27.5" fill="#f1f1f1" stroke="#b4b4b4" stroke-width="1" stroke-dasharray="2,1"/>
<ellipse cx="1280.7" cy="279" rx="35" ry="19" fill="#fdfdfd" stroke="#c4c4c4" stroke-width="0.8" stroke-dasharray="2,1"/>
<ellipse cx="1284" cy="284" rx="26" ry="11" fill="url(#csh)"/>
<path d="M1280.7 233 L1306.5 245.5 L1280.7 259 L1255.2 245.5 Z" fill="#f2f2f2" stroke="#8e8e8e" stroke-width="0.9"/>
<path d="M1255.2 245.5 L1280.7 259 L1280.7 289.5 L1255.2 274 Z" fill="url(#cf1)" stroke="#8e8e8e" stroke-width="0.9"/>
<path d="M1306.5 245.5 L1280.7 259 L1280.7 289.5 L1306.5 273 Z" fill="url(#cf2)" stroke="#8e8e8e" stroke-width="0.9"/>
<g fill="#f2f2f2" stroke="#a0a0a0" stroke-width="0.45"><text x="1261" y="275" font-size="13">前</text><text x="1285" y="274" font-size="13">右</text><text x="1274" y="251" font-size="10">上</text></g>
<g fill="#eeeeee" stroke="#b0b0b0" stroke-width="0.45"><text x="1243" y="262" font-size="9">南</text><text x="1309" y="264" font-size="9">东</text><text x="1238" y="305" font-size="9">西</text><text x="1313" y="304" font-size="9">北</text></g>
</svg>
<!-- nav bar -->
<div class="a" style="left:1311px;top:320px;width:36px;height:116px;background:#f7f7f7;border:2px solid #b4b4b4;border-radius:4px"></div>
<svg style="left:1311px;top:320px" width="36" height="116" viewBox="1311 320 36 116">
<circle cx="1339" cy="326" r="3.8" fill="#c8c8c8"/><path d="M1337.2 324.2 l3.6 3.6 M1340.8 324.2 l-3.6 3.6" stroke="#fff" stroke-width="1"/>
<path d="M1329 341 a10 10 0 1 0 10 10 v-8 a2 2 0 0 0 -2 -2 z" fill="#ececec" stroke="#9a9a9a" stroke-width="1.1"/>
<circle cx="1329" cy="351" r="6" fill="#f4f4f4" stroke="#8a8a8a" stroke-width="1.1"/>
<path d="M1326 369.5 h6 l-3 3 z M1326 411.5 h6 l-3 3 z" fill="#666"/>
<path d="M1314 377.5 H1344" stroke="#cfcfcf"/>
<rect x="1321" y="386" width="11" height="10" fill="#a6cf8a" stroke="#6aa04a" stroke-width="1"/>
<circle cx="1331" cy="397" r="3.2" fill="#fff" stroke="#555" stroke-width="1.1"/><path d="M1333 399.5 l3 3" stroke="#555" stroke-width="1.5"/>
<circle cx="1339" cy="429" r="3.8" fill="#c8c8c8"/><path d="M1336.8 429 h4.4" stroke="#fff" stroke-width="1.2"/>
</svg>
<!-- vertical scrollbar -->
<div class="a" style="left:1348px;top:166px;width:16px;height:520px;background:#ececec"></div>
<div class="a" style="left:1352px;top:172px;width:0;height:0;border-left:4px solid transparent;border-right:4px solid transparent;border-bottom:4px solid #444"></div>
<div class="a" style="left:1348px;top:418px;width:15px;height:14px;background:linear-gradient(90deg,#fafafa,#d6d6d6);border:1px solid #9a9a9a;border-radius:2px"></div>
<div class="a" style="left:1352px;top:675px;width:0;height:0;border-left:4px solid transparent;border-right:4px solid transparent;border-top:4px solid #444"></div>
<!-- bottom view bar -->
<div class="a" style="left:263px;top:685px;width:1103px;height:18px;background:#f0f0f0;border-top:1px solid #e4e4e4"></div>
<div class="t" style="left:284px;top:687px;font-size:12px;color:#111">1&nbsp;&nbsp;:&nbsp;&nbsp;100</div>
<svg style="left:340px;top:686px" width="300" height="16" viewBox="340 686 300 16">
<rect x="342.5" y="686.5" width="16" height="13" fill="#fff" stroke="#444" stroke-width="1.2"/><rect x="344" y="688" width="4" height="3" fill="#555"/><rect x="352" y="688" width="5" height="3" fill="#555"/><rect x="348" y="691" width="4" height="4" fill="#333"/><rect x="344" y="691" width="4" height="4" fill="#aaa"/><rect x="352" y="691" width="5" height="4" fill="#aaa"/><rect x="344" y="695" width="13" height="3" fill="#ddd"/>
<path d="M364 693 l4 -4 h9 v8 l-4 4 h-9 z" fill="#8ec4ec" stroke="#1c5fb4" stroke-width="1"/><path d="M364 693 h9 l4 -4 M373 693 v8" fill="none" stroke="#1c5fb4" stroke-width="1"/>
<circle cx="388" cy="693" r="3.5" fill="#f7d24a" stroke="#e0a020"/><path d="M383 688 l2 2 M393 688 l-2 2 M388 686.5 v2 M382 693 h2" stroke="#e0a020"/><path d="M390 694 l6 6 M396 694 l-6 6" stroke="#d42020" stroke-width="2"/>
<circle cx="411" cy="692" r="4" fill="none" stroke="#1c5fb4" stroke-width="1.2"/><path d="M406 699 h8" stroke="#333" stroke-width="1.5"/><path d="M413 695 l5 5 M418 695 l-5 5" stroke="#d42020" stroke-width="2"/>
<path d="M427 691 h10 l3 4 l-3 4 h-8 z" fill="none" stroke="#555" stroke-width="1.1"/><circle cx="438" cy="696" r="3" fill="#cfe6fa" stroke="#1c5fb4"/>
<path d="M446 690 h14 v10 h-14 z" fill="none" stroke="#1c5fb4" stroke-width="1.1" stroke-dasharray="2,1"/><path d="M452 693 l6 6 M458 693 l-6 6" stroke="#d42020" stroke-width="2"/>
<path d="M468 690 h12 v10 h-12 z" fill="none" stroke="#1c5fb4" stroke-width="1.1" stroke-dasharray="2,1"/><circle cx="478" cy="695" r="3" fill="#cfe6fa" stroke="#1c5fb4"/>
<path d="M489 696 l7 -7 l7 7 v5 h-14 z" fill="#fff" stroke="#333" stroke-width="1.1"/><rect x="496" y="696" width="6" height="5" fill="#6bb04d"/>
<path d="M510 693 q4 -4 8 0 q4 4 8 0" fill="none" stroke="#333" stroke-width="1.2"/><circle cx="515" cy="695" r="2.5" fill="none" stroke="#333"/><circle cx="522" cy="695" r="2.5" fill="none" stroke="#333"/>
<circle cx="538" cy="693" r="2.8" fill="#cfe6fa" stroke="#1c5fb4" stroke-width="1.1"/><path d="M538 696 v3" stroke="#1c5fb4"/>
<rect x="552" y="689" width="13" height="10" fill="none" stroke="#333" stroke-width="1.1" stroke-dasharray="2,1"/><circle cx="561" cy="695" r="2.5" fill="none" stroke="#333"/>
<path d="M572 700 v-8 l5 -3 l5 3 v8" fill="none" stroke="#c03030" stroke-width="1.2"/><path d="M574 694 h6" stroke="#333"/><circle cx="584" cy="693" r="3" fill="#f7d24a"/>
<path d="M595 692 l3 -3 h9 v8 l-3 3 h-9 z" fill="#ddd" stroke="#333" stroke-width="1.1"/><path d="M595 692 h9 l3 -3 M604 692 v8" fill="none" stroke="#333"/>
<path d="M618 694 l4 -4 v8 z" fill="#333"/>
</svg>
<!-- horizontal scrollbar -->
<div class="a" style="left:626px;top:686px;width:722px;height:17px;background:#ececec"></div>
<div class="a" style="left:973px;top:686px;width:15px;height:15px;background:linear-gradient(#fafafa,#d6d6d6);border:1px solid #9a9a9a;border-radius:2px"></div>
<div class="a" style="left:1337px;top:690px;width:0;height:0;border-top:4px solid transparent;border-bottom:4px solid transparent;border-left:4px solid #333"></div>
<svg style="left:1352px;top:689px" width="12" height="12" viewBox="0 0 12 12"><g fill="#aaa"><rect x="9" y="2" width="1.5" height="1.5"/><rect x="6" y="5" width="1.5" height="1.5"/><rect x="9" y="5" width="1.5" height="1.5"/><rect x="3" y="8" width="1.5" height="1.5"/><rect x="6" y="8" width="1.5" height="1.5"/><rect x="9" y="8" width="1.5" height="1.5"/></g></svg>
<!-- STATUS BAR -->
<div class="a" style="left:0;top:703px;width:1366px;height:25px;background:linear-gradient(#f2f2f2,#e2e2e2);border-top:1px solid #bdbdbd"></div>
<div class="t" style="left:2px;top:709px;font-size:12.5px;color:#111">就绪</div>
<svg style="left:483px;top:707px" width="22" height="18" viewBox="0 0 22 18">
<path d="M2 7 l4 -2 l4 2 v9 l-4 2 l-4 -2 z" fill="#5b9bd8" stroke="#1c4f8f" stroke-width="0.9"/>
<path d="M6 5 l4 -3 l3 2 v4" fill="#8fd07a" stroke="#2f7a1f" stroke-width="0.9"/>
<circle cx="15" cy="6" r="3" fill="#fff" stroke="#333"/><path d="M15 9 v8" stroke="#333" stroke-width="1.6"/>
</svg>
<div class="a" style="left:508px;top:708px;width:205px;height:18px;background:#fff;border:1px solid #e0e0e0"></div>
<div class="a" style="left:702px;top:716px;width:0;height:0;border-left:4px solid transparent;border-right:4px solid transparent;border-top:4px solid #999"></div>
<svg style="left:718px;top:707px" width="22" height="18" viewBox="0 0 22 18">
<path d="M4 17 l3 -8 h3 l4 -6 h5 v5 h-5 l-4 4" fill="none" stroke="#aaa" stroke-width="2"/>
</svg>
<div class="t" style="left:742px;top:709px;font-size:12.5px;color:#111">:0</div>
<div class="a" style="left:770px;top:705px;width:1px;height:22px;background:#d0d0d0"></div>
<svg style="left:782px;top:708px" width="40" height="17" viewBox="0 0 40 17">
<rect x="1" y="1" width="16" height="14" fill="#fff" stroke="#333" stroke-width="1.1"/><path d="M1 4 h16 M4 7 h2 M8 7 h7 M4 10 h2 M8 10 h7 M4 13 h2 M8 13 h7" stroke="#333"/>
<rect x="22" y="2" width="13" height="13" fill="#999"/><path d="M20 8 h9 m-3 -3 l3 3 l-3 3" stroke="#fff" stroke-width="1.3" fill="none"/>
</svg>
<div class="a" style="left:824px;top:708px;width:156px;height:18px;background:#fff;border:1px solid #e0e0e0"></div>
<div class="t" style="left:827px;top:710px;font-size:12.5px;color:#888">主模型</div>
<div class="a" style="left:967px;top:716px;width:0;height:0;border-left:4px solid transparent;border-right:4px solid transparent;border-top:4px solid #999"></div>
<div class="a" style="left:1143px;top:705px;width:23px;height:22px;background:#dedede"></div>
<div class="a" style="left:1168px;top:705px;width:24px;height:22px;background:#dedede"></div>
<div class="a" style="left:1194px;top:705px;width:24px;height:22px;background:#dedede"></div>
<div class="a" style="left:1220px;top:705px;width:24px;height:22px;background:#dedede"></div>
<div class="a" style="left:1247px;top:705px;width:23px;height:22px;background:#dedede"></div>
<svg style="left:1143px;top:705px" width="160" height="22" viewBox="1143 705 160 22">
<g fill="#fff" stroke="#333" stroke-width="0.9">
<path d="M1153 713 v10 l2.5 -2.5 l2 4 l1.5 -0.8 l-2 -3.8 h3.5 z"/>
<path d="M1179 713 v10 l2.5 -2.5 l2 4 l1.5 -0.8 l-2 -3.8 h3.5 z"/>
<path d="M1204 713 v10 l2.5 -2.5 l2 4 l1.5 -0.8 l-2 -3.8 h3.5 z"/>
<path d="M1230 713 v10 l2.5 -2.5 l2 4 l1.5 -0.8 l-2 -3.8 h3.5 z"/>
<path d="M1256 713 v10 l2.5 -2.5 l2 4 l1.5 -0.8 l-2 -3.8 h3.5 z"/>
</g>
<ellipse cx="1150" cy="716" rx="4" ry="2.5" fill="none" stroke="#e0b020" stroke-width="2"/><ellipse cx="1158" cy="716" rx="4" ry="2.5" fill="none" stroke="#e0b020" stroke-width="2"/>
<path d="M1173 721 l6 -6 h8 M1173 716 l5 -5 h8" fill="none" stroke="#2a70c8" stroke-width="1.5"/>
<path d="M1196 711 h8 v5 h-8 z M1200 716 v8" fill="#f0a050" stroke="#c06020" stroke-width="1.3"/>
<path d="M1224 712 l5 -3 v12 l-5 3 z" fill="#a8d0f0" stroke="#2a70c8" stroke-width="1"/><path d="M1234 708 l5 5 M1239 708 l-5 5" stroke="#d42020" stroke-width="1.8"/>
<path d="M1252 712 h8 M1256 708 v8 M1252 712 l1.5 -1.5 M1252 712 l1.5 1.5 M1260 712 l-1.5 -1.5 M1260 712 l-1.5 1.5 M1256 708 l-1.5 1.5 M1256 708 l1.5 1.5" stroke="#111" stroke-width="1.2" fill="none"/>
<path d="M1274 710 h15 l-5.5 7 v6 h-4 v-6 z" fill="#fff" stroke="#555" stroke-width="1.2"/>
</svg>
<div class="t" style="left:1289px;top:712px;font-size:12px;color:#111">:0</div>
<!-- TASKBAR -->
<div class="a" style="left:0;top:728px;width:1366px;height:40px;background:
radial-gradient(ellipse 90px 8px at 640px 8px,rgba(110,140,170,0.7),transparent),
radial-gradient(ellipse 110px 9px at 760px 30px,rgba(95,125,155,0.6),transparent),
radial-gradient(ellipse 140px 10px at 980px 14px,rgba(20,35,55,0.7),transparent),
radial-gradient(ellipse 120px 9px at 880px 28px,rgba(90,120,150,0.5),transparent),
radial-gradient(ellipse 160px 10px at 1180px 10px,rgba(20,35,55,0.6),transparent),
radial-gradient(ellipse 100px 10px at 300px 20px,rgba(100,130,160,0.5),transparent),
radial-gradient(ellipse 120px 10px at 180px 30px,rgba(25,40,60,0.5),transparent),
linear-gradient(90deg,#3c566e 0%,#3f5a74 20%,#3a5670 40%,#2f4a66 60%,#2a4460 75%,#243c56 90%,#22364e 100%);border-top:1px solid #8fa2b2"></div>
<div class="a" style="left:0;top:729px;width:1366px;height:39px;background:linear-gradient(rgba(255,255,255,0.06),rgba(0,0,0,0.12))"></div>
<!-- start orb -->
<svg style="left:6px;top:729px" width="44" height="39" viewBox="0 0 44 39">
<defs><radialGradient id="orb" cx="0.5" cy="0.75" r="0.6"><stop offset="0" stop-color="#4fc0f0"/><stop offset="0.45" stop-color="#1f70b0"/><stop offset="1" stop-color="#0c2e58"/></radialGradient>
<linearGradient id="orbg" x1="0" y1="0" x2="0" y2="1"><stop offset="0" stop-color="#fff" stop-opacity="0.55"/><stop offset="1" stop-color="#fff" stop-opacity="0.05"/></linearGradient></defs>
<circle cx="21" cy="19.5" r="18" fill="url(#orb)" stroke="#a8c8e0" stroke-width="1"/>
<path d="M11.5 12.5 q4 -2.5 8.5 -0.5 l-1.3 7 q-4 -2 -8.5 0.5 z" fill="#f35325"/>
<path d="M21 12.2 q4.5 2 9 -0.5 l-1.3 7 q-4.5 2.5 -9 0.5 z" fill="#81bc06"/>
<path d="M10.2 20.5 q4 -2.5 8.5 -0.5 l-1.3 7 q-4 -2 -8.5 0.5 z" fill="#05a6f0"/>
<path d="M19.7 20.2 q4.5 2 9 -0.5 l-1.3 7 q-4.5 2.5 -9 0.5 z" fill="#ffba08"/>
<ellipse cx="21" cy="11" rx="14" ry="8" fill="url(#orbg)"/>
</svg>
<div class="a" style="left:60px;top:729px;width:58px;height:38px;border:1px solid rgba(255,255,255,0.55);border-radius:3px;background:linear-gradient(135deg,rgba(200,210,220,0.55),rgba(150,165,180,0.35))"></div>
<svg style="left:71px;top:733px" width="36" height="32" viewBox="0 0 36 32">
<circle cx="18" cy="16" r="14" fill="#3a8de0" stroke="#d8ecff" stroke-width="2"/>
<path d="M9 10 q5 -3 8 1 q-1 5 -5 5 q-2 4 -4 1 z M18 18 q5 -1 7 3 q-2 5 -5 5 z M21 8 q4 0 5 3 l-4 1 z" fill="#c8e8ff"/>
</svg>
<svg style="left:132px;top:731px" width="38" height="36" viewBox="0 0 38 36">
<circle cx="19" cy="18" r="15" fill="#1a6fd0" stroke="#fff" stroke-width="3"/>
<path d="M13 9 v18 M13 18 l9 -9 M15 16 l8 11" stroke="#fff" stroke-width="4" fill="none"/>
</svg>
<svg style="left:197px;top:731px" width="32" height="36" viewBox="0 0 32 36">
<ellipse cx="16" cy="11" rx="8.5" ry="9.5" fill="#1a1a1a"/>
<ellipse cx="16" cy="23" rx="11" ry="10" fill="#1a1a1a"/>
<ellipse cx="16" cy="24" rx="8" ry="8.5" fill="#fafafa"/>
<ellipse cx="13" cy="9" rx="2" ry="2.6" fill="#fff"/><ellipse cx="19" cy="9" rx="2" ry="2.6" fill="#fff"/>
<ellipse cx="16" cy="14" rx="4" ry="2" fill="#f5b800"/>
<path d="M6 17 q10 5 20 0 l0.5 4 q-10 5 -21 0 z" fill="#e21b1b"/><path d="M18 20 l5 0 l-1 9 l-4 -1 z" fill="#e21b1b"/>
<ellipse cx="10" cy="32.5" rx="5.5" ry="2.6" fill="#f5a800"/><ellipse cx="22" cy="32.5" rx="5.5" ry="2.6" fill="#f5a800"/>
</svg>
<svg style="left:256px;top:731px" width="36" height="36" viewBox="0 0 36 36">
<path d="M18 3 q10 0 10 12 q0 4 4 10 q-2 3 -6 1 q-3 6 -8 6 q-5 0 -8 -6 q-4 2 -6 -1 q4 -6 4 -10 q0 -12 10 -12 z" fill="#28b4f0"/>
<ellipse cx="18" cy="10" rx="6" ry="4" fill="#8ee0ff" opacity="0.6"/>
</svg>
<svg style="left:320px;top:731px" width="34" height="35" viewBox="0 0 34 35">
<rect x="1" y="1" width="32" height="33" rx="4" fill="#2a9ef0"/>
<circle cx="12" cy="19" r="6" fill="none" stroke="#fff" stroke-width="3"/><circle cx="21" cy="13" r="6" fill="none" stroke="#fff" stroke-width="3"/><path d="M24 25 h4" stroke="#fff" stroke-width="3"/>
</svg>
<div class="a" style="left:370px;top:730px;width:49px;height:37px;border:1px solid rgba(255,255,255,0.35);border-radius:3px;background:linear-gradient(rgba(255,255,255,0.28),rgba(255,255,255,0.08))"></div>
<svg style="left:380px;top:736px" width="30" height="26" viewBox="0 0 30 26">
<rect x="1" y="1" width="28" height="23" fill="#f0f0f0" stroke="#555"/><rect x="4" y="4" width="22" height="17" fill="#5aa0c8"/><path d="M4 15 q8 -6 22 2 v4 h-22 z" fill="#6aa050"/>
</svg>
<div class="a" style="left:424px;top:730px;width:2px;height:37px;background:rgba(255,255,255,0.2)"></div>
<div class="a" style="left:433px;top:730px;width:49px;height:37px;border:1px solid rgba(255,255,255,0.35);border-radius:3px;background:linear-gradient(rgba(255,255,255,0.28),rgba(255,255,255,0.08))"></div>
<svg style="left:441px;top:734px" width="34" height="30" viewBox="0 0 34 30">
<path d="M2 6 h10 l2 3 h18 v19 h-30 z" fill="#e8c860" stroke="#a08030"/><rect x="4" y="11" width="26" height="16" fill="#f8e8a0"/>
<rect x="9" y="18" width="16" height="9" fill="#7ab8e0" stroke="#3a78a8"/><circle cx="8" cy="4" r="2" fill="#e04040"/><circle cx="14" cy="4" r="2" fill="#40a040"/>
</svg>
<div class="a" style="left:487px;top:730px;width:2px;height:37px;background:rgba(255,255,255,0.2)"></div>
<div class="a" style="left:494px;top:729px;width:58px;height:38px;border:1px solid #e8ecf0;border-radius:3px;background:linear-gradient(90deg,#b9c1c9,#d2d8de 50%,#b4bcc4)"></div><div class="a" style="left:506px;top:732px;width:33px;height:32px;background:linear-gradient(#f4f6f8,#dde2e7)"></div>
<svg style="left:508px;top:734px" width="30" height="30" viewBox="0 0 28 30">
<path d="M4 27 L8 5 L14 2 L20 6 L18 13 L25 25 L19 27 L12 15 L10 27 Z" fill="#1f47c9"/>
<path d="M13 8 L20 6 L18 13 L12 15 Z" fill="#173aa6"/>
</svg>
<!-- tray -->
<div class="t" style="left:1071px;top:742px;font-family:'Liberation Mono',monospace;font-size:11px;color:#fff">CH</div>
<svg style="left:1090px;top:736px" width="200" height="26" viewBox="1090 736 200 26">
<rect x="1094" y="744" width="14" height="9" rx="1" fill="#ccc" stroke="#eee"/><path d="M1096 747 h10 M1096 750 h10" stroke="#777" stroke-dasharray="1,1"/>
<circle cx="1123" cy="747" r="7" fill="#1a4fc0" stroke="#fff" stroke-width="1.5"/><text x="1119.5" y="751.5" font-size="11" font-weight="bold" fill="#fff">?</text>
<rect x="1141" y="737" width="7" height="5" fill="none" stroke="#fff"/><rect x="1143" y="739" width="7" height="5" fill="#33475a" stroke="#fff"/><path d="M1142 749 h6 l-3 3 z" fill="#fff"/>
<path d="M1159 751 h8 l-4 -5 z" fill="#fff"/>
<circle cx="1186" cy="746" r="5" fill="#f07020"/><circle cx="1192" cy="752" r="4" fill="#f8c040"/><path d="M1190 751.5 h4" stroke="#555"/>
<path d="M1206 741 h8 v14 h-8 z" fill="none" stroke="#fff" stroke-width="1.5"/><path d="M1213 744 h4 v6 h-4 M1215 750 v5" stroke="#fff" stroke-width="1.5" fill="none"/>
<path d="M1231 745 h3 l4 -4 v14 l-4 -4 h-3 z" fill="#fff"/><path d="M1241 744 q2 4 0 8" stroke="#fff" fill="none"/>
<rect x="1257" y="743" width="11" height="9" fill="#2a3a4a" stroke="#fff" stroke-width="1.3"/><path d="M1254 739 v6 M1256 739 v6 M1262 752 v3 M1258 756 h9" stroke="#fff" stroke-width="1.3"/>
</svg>
<div class="t" style="left:1297px;top:733px;font-size:13px;color:#fff">16:24</div>
<div class="t" style="left:1280px;top:750px;font-size:13px;color:#fff">2014/10/28</div>
<div class="a" style="left:1352px;top:730px;width:14px;height:38px;border:1px solid rgba(255,255,255,0.35);background:rgba(255,255,255,0.08)"></div>
</body></html>
